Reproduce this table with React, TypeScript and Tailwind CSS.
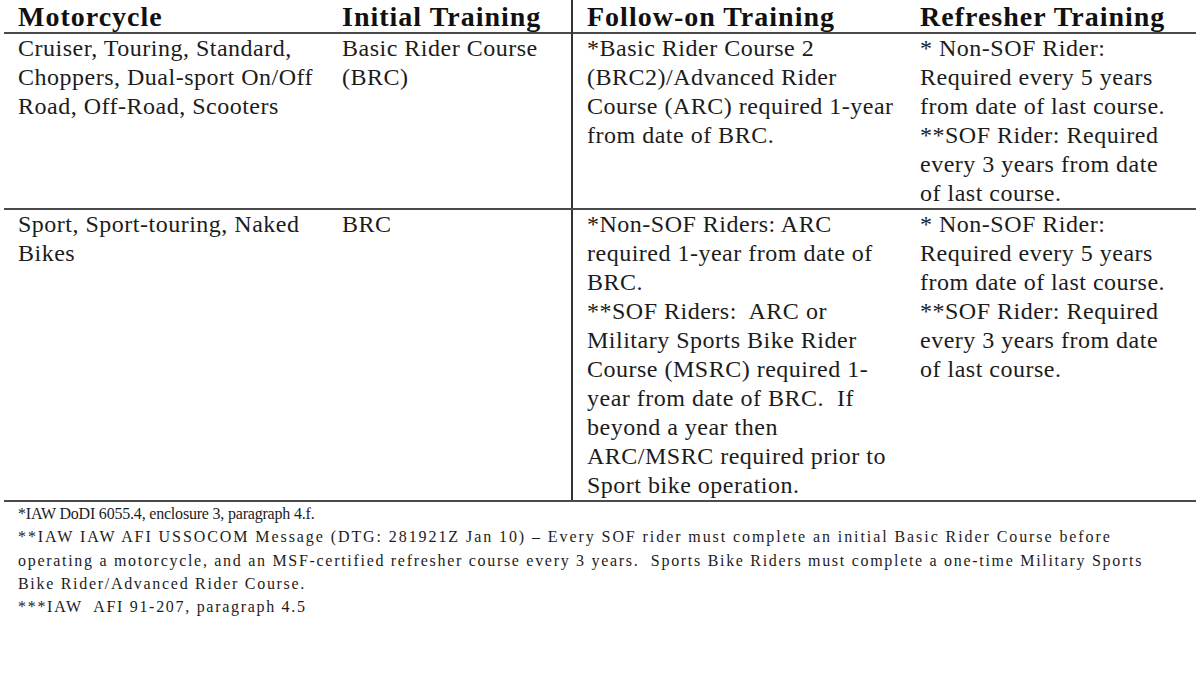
import React from "react";

const serif = { fontFamily: '"Liberation Serif", "Times New Roman", serif' };

function Lines({ lines }: { lines: string[] }) {
  return (
    <>
      {lines.map((l, i) => (
        <div key={i} className="whitespace-pre">
          {l}
        </div>
      ))}
    </>
  );
}

export default function App() {
  const cell = "pl-[14px]";
  const body = "text-[24px] leading-[29px] tracking-[0.5px] text-[#1c1c1c]";
  const head = "text-[28px] font-bold tracking-[1px] leading-[34px] text-[#111]";
  return (
    <div className="w-[1200px] h-[684px] bg-white overflow-hidden" style={serif}>
      <div className="mx-[4px] w-[1192px]">
        {/* header */}
        <div className="grid grid-cols-[324px_243px_335px_290px] border-b-2 border-[#4a4a4a] h-[34px]">
          <div className={`${cell} ${head}`}>Motorcycle</div>
          <div className={`${cell} ${head}`}>Initial Training</div>
          <div className={`${cell} border-l-2 border-[#333] ${head}`}>Follow-on Training</div>
          <div className={`${cell} ${head}`}>Refresher Training</div>
        </div>
        {/* row 1 */}
        <div className={`grid grid-cols-[324px_243px_335px_290px] border-b-2 border-[#4a4a4a] ${body}`}>
          <div className={cell}>
            <Lines lines={["Cruiser, Touring, Standard,", "Choppers, Dual-sport On/Off", "Road, Off-Road, Scooters"]} />
          </div>
          <div className={cell}>
            <Lines lines={["Basic Rider Course", "(BRC)"]} />
          </div>
          <div className={`${cell} border-l-2 border-[#333]`}>
            <Lines lines={["*Basic Rider Course 2", "(BRC2)/Advanced Rider", "Course (ARC) required 1-year", "from date of BRC."]} />
          </div>
          <div className={cell}>
            <Lines
              lines={[
                "* Non-SOF Rider:",
                "Required every 5 years",
                "from date of last course.",
                "**SOF Rider: Required",
                "every 3 years from date",
                "of last course.",
              ]}
            />
          </div>
        </div>
        {/* row 2 */}
        <div className={`grid grid-cols-[324px_243px_335px_290px] border-b-2 border-[#4a4a4a] ${body}`}>
          <div className={cell}>
            <Lines lines={["Sport, Sport-touring, Naked", "Bikes"]} />
          </div>
          <div className={cell}>
            <Lines lines={["BRC"]} />
          </div>
          <div className={`${cell} border-l-2 border-[#333]`}>
            <Lines
              lines={[
                "*Non-SOF Riders: ARC",
                "required 1-year from date of",
                "BRC.",
                "**SOF Riders:  ARC or",
                "Military Sports Bike Rider",
                "Course (MSRC) required 1-",
                "year from date of BRC.  If",
                "beyond a year then",
                "ARC/MSRC required prior to",
                "Sport bike operation.",
              ]}
            />
          </div>
          <div className={cell}>
            <Lines
              lines={[
                "* Non-SOF Rider:",
                "Required every 5 years",
                "from date of last course.",
                "**SOF Rider: Required",
                "every 3 years from date",
                "of last course.",
              ]}
            />
          </div>
        </div>
        {/* footnotes */}
        <div className="pl-[14px] text-[16px] leading-[23.3px] text-[#1c1c1c]">
          <div className="whitespace-pre tracking-[-0.2px]">*IAW DoDI 6055.4, enclosure 3, paragraph 4.f.</div>
          <div className="whitespace-pre tracking-[1.92px]">
            **IAW IAW AFI USSOCOM Message (DTG: 281921Z Jan 10) {"\u2013"} Every SOF rider must complete an initial Basic Rider Course before
          </div>
          <div className="whitespace-pre tracking-[1.7px]">
            operating a motorcycle, and an MSF-certified refresher course every 3 years.  Sports Bike Riders must complete a one-time Military Sports
          </div>
          <div className="whitespace-pre tracking-[1.7px]">Bike Rider/Advanced Rider Course.</div>
          <div className="whitespace-pre tracking-[1.7px]">***IAW  AFI 91-207, paragraph 4.5</div>
        </div>
      </div>
    </div>
  );
}
